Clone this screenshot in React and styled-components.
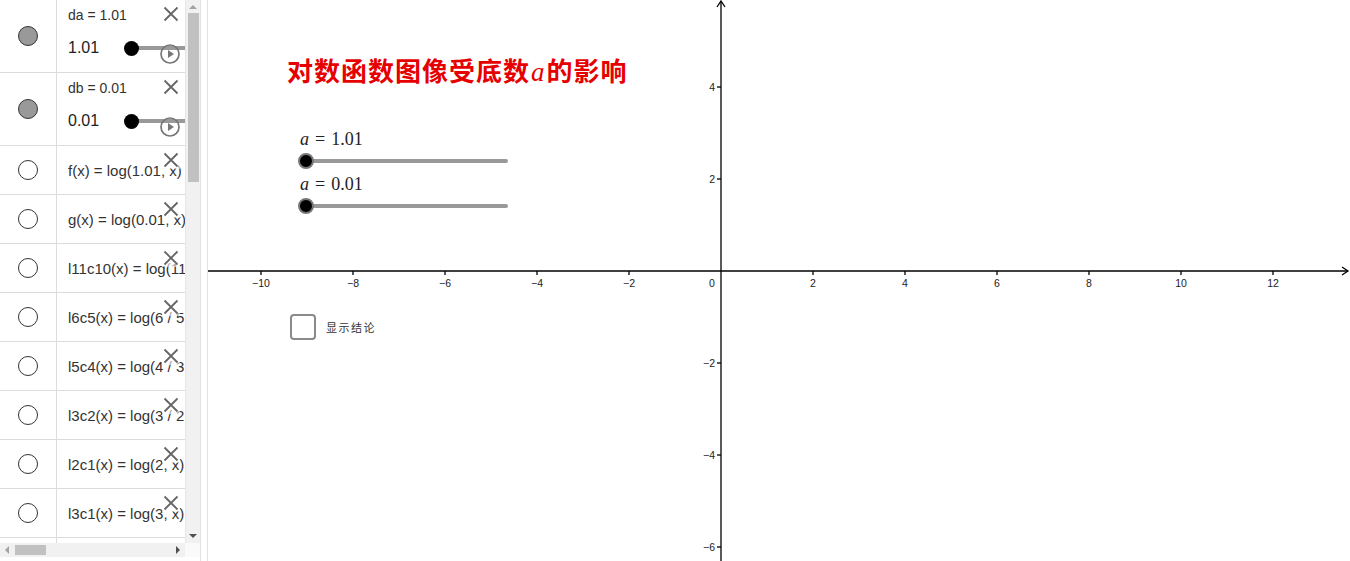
import React from 'react'
import styled, { createGlobalStyle } from 'styled-components'

const GlobalStyle = createGlobalStyle`
  * { box-sizing: border-box; }
  html, body { margin: 0; padding: 0; background: #fff; overflow: hidden; }
  body { font-family: "Liberation Sans", Arial, sans-serif; color: #333; }
`

const UNIT = 46
const OX = 513
const OY = 271

const functions = [
  'f(x) = log(1.01, x)',
  'g(x) = log(0.01, x)',
  'l11c10(x) = log(11 / 10, x)',
  'l6c5(x) = log(6 / 5, x)',
  'l5c4(x) = log(4 / 3, x)',
  'l3c2(x) = log(3 / 2, x)',
  'l2c1(x) = log(2, x)',
  'l3c1(x) = log(3, x)',
  '',
]

const sliders = [
  { name: 'da', value: '1.01', height: 73 },
  { name: 'db', value: '0.01', height: 73 },
]

const CloseIcon = () => (
  <svg width="16" height="16" viewBox="0 0 16 16">
    <path d="M1.5 1.5 L14.5 14.5 M14.5 1.5 L1.5 14.5" stroke="#666" strokeWidth="1.8" fill="none" />
  </svg>
)

const PlayIcon = () => (
  <svg width="20" height="20" viewBox="0 0 20 20">
    <circle cx="10" cy="10" r="9" stroke="#777" strokeWidth="1.7" fill="none" />
    <path d="M8 6 L14 10 L8 14 Z" fill="#777" />
  </svg>
)

const Axes = () => {
  const xs = [-10, -8, -6, -4, -2, 2, 4, 6, 8, 10, 12]
  const ys = [-6, -4, -2, 2, 4]
  const minus = (v) => (v < 0 ? '\u2212' + Math.abs(v) : String(v))
  return (
    <AxesSvg width="1142" height="561">
      <g stroke="#000" strokeWidth="1.3" fill="none">
        <line x1="0" y1={OY} x2="1140" y2={OY} />
        <line x1={OX} y1="1" x2={OX} y2="561" />
        <path d={`M1134 ${OY - 4} L1140 ${OY} L1134 ${OY + 4}`} />
        <path d={`M${OX - 4} 7 L${OX} 1 L${OX + 4} 7`} />
        {xs.map((v) => (
          <line key={'tx' + v} x1={OX + v * UNIT} y1={OY} x2={OX + v * UNIT} y2={OY + 4} />
        ))}
        {ys.map((v) => (
          <line key={'ty' + v} x1={OX - 4} y1={OY - v * UNIT} x2={OX} y2={OY - v * UNIT} />
        ))}
      </g>
      <g fill="#222" fontSize="10.5" fontFamily="Liberation Sans, Arial, sans-serif">
        {xs.map((v) => (
          <text key={'lx' + v} x={OX + v * UNIT} y={OY + 16} textAnchor="middle">{minus(v)}</text>
        ))}
        <text x={OX - 9} y={OY + 16} textAnchor="middle">0</text>
        {ys.map((v) => (
          <text key={'ly' + v} x={OX - 6} y={OY - v * UNIT + 4} textAnchor="end">{minus(v)}</text>
        ))}
      </g>
    </AxesSvg>
  )
}

const App = () => {
  return (
    <>
      <GlobalStyle />
      <Page>
        <Sidebar>
          <ListViewport>
            {sliders.map((s) => (
              <Row key={s.name} $height={s.height}>
                <MarbleCell>
                  <Marble $filled />
                </MarbleCell>
                <Content>
                  <SliderName>{s.name} = {s.value}</SliderName>
                  <ValueLine>
                    <ValueText>{s.value}</ValueText>
                    <Knob />
                    <TrackLine />
                  </ValueLine>
                  <PlayButton><PlayIcon /></PlayButton>
                  <CloseButton><CloseIcon /></CloseButton>
                </Content>
              </Row>
            ))}
            {functions.map((f, i) => (
              <Row key={i} $height={49}>
                <MarbleCell>{f && <Marble />}</MarbleCell>
                <Content $center>
                  <Formula>{f}</Formula>
                  {f && <CloseButton><CloseIcon /></CloseButton>}
                </Content>
              </Row>
            ))}
          </ListViewport>
          <VScroll>
            <ArrowUp />
            <VThumb />
            <ArrowDown />
          </VScroll>
          <HScroll>
            <ArrowLeft />
            <HThumb />
            <ArrowRight />
          </HScroll>
          <Corner />
        </Sidebar>
        <Divider />
        <Graph>
          <Axes />
          <Title>
            对数函数图像受底数<MathA>a</MathA>的影响
          </Title>
          <GraphSlider $top={128}>
            <SliderLabel><i>a</i><Eq>=</Eq>1.01</SliderLabel>
            <GraphTrack>
              <GraphKnob />
            </GraphTrack>
          </GraphSlider>
          <GraphSlider $top={173}>
            <SliderLabel><i>a</i><Eq>=</Eq>0.01</SliderLabel>
            <GraphTrack>
              <GraphKnob />
            </GraphTrack>
          </GraphSlider>
          <CheckRow>
            <CheckBox />
            <CheckLabel>显示结论</CheckLabel>
          </CheckRow>
        </Graph>
      </Page>
    </>
  )
}

export default App

const Page = styled.div`
  display: flex;
  width: 1350px;
  height: 561px;
  background: #fff;
`

const Sidebar = styled.div`
  width: 200px;
  height: 561px;
  display: grid;
  grid-template-columns: 185px 15px;
  grid-template-rows: 543px 14px;
  flex-shrink: 0;
`

const ListViewport = styled.div`
  overflow: hidden;
  background: #fff;
`

const Row = styled.div`
  display: flex;
  height: ${(p) => p.$height}px;
  border-bottom: 1px solid #dcdcdc;
`

const MarbleCell = styled.div`
  width: 57px;
  flex-shrink: 0;
  display: flex;
  align-items: center;
  justify-content: center;
  border-right: 1px solid #dcdcdc;
  padding-right: 1px;
`

const Marble = styled.div`
  width: 20px;
  height: 20px;
  border-radius: 50%;
  border: 1px solid #333;
  background: ${(p) => (p.$filled ? '#999' : '#fff')};
`

const Content = styled.div`
  position: relative;
  flex: 1;
  min-width: 0;
  padding-left: 11px;
  display: flex;
  flex-direction: column;
  justify-content: ${(p) => (p.$center ? 'center' : 'flex-start')};
  overflow: hidden;
`

const SliderName = styled.div`
  margin-top: 6px;
  font-size: 14px;
  line-height: 18px;
  color: #333;
  white-space: nowrap;
`

const ValueLine = styled.div`
  margin-top: 14px;
  height: 20px;
  display: flex;
  align-items: center;
`

const ValueText = styled.div`
  width: 56px;
  flex-shrink: 0;
  font-size: 16px;
  color: #222;
`

const Knob = styled.div`
  width: 15px;
  height: 15px;
  border-radius: 50%;
  background: #000;
  flex-shrink: 0;
  position: relative;
  z-index: 1;
`

const TrackLine = styled.div`
  flex: 1;
  height: 4px;
  margin-left: -2px;
  background: #999;
`

const PlayButton = styled.div`
  position: absolute;
  left: 103px;
  top: 44px;
  width: 20px;
  height: 20px;
  display: flex;
`

const CloseButton = styled.div`
  position: absolute;
  left: 105px;
  top: 5px;
  width: 18px;
  height: 18px;
  padding: 1px;
  display: flex;
  background: rgba(255, 255, 255, 0.55);
`

const Formula = styled.div`
  font-size: 15px;
  color: #333;
  white-space: nowrap;
`

const VScroll = styled.div`
  background: #f1f1f1;
  border-left: 1px solid #e6e6e6;
  display: flex;
  flex-direction: column;
  align-items: center;
`

const VThumb = styled.div`
  width: 11px;
  height: 169px;
  background: #c1c1c1;
`

const ArrowUp = styled.div`
  width: 0;
  height: 0;
  margin: 5px 0 4px;
  border-left: 4px solid transparent;
  border-right: 4px solid transparent;
  border-bottom: 4px solid #a3a3a3;
`

const ArrowDown = styled.div`
  width: 0;
  height: 0;
  margin-top: auto;
  margin-bottom: 5px;
  border-left: 4px solid transparent;
  border-right: 4px solid transparent;
  border-top: 4px solid #505050;
`

const HScroll = styled.div`
  background: #f1f1f1;
  display: flex;
  align-items: center;
  padding: 0 5px;
`

const HThumb = styled.div`
  width: 31px;
  height: 10px;
  margin-left: 6px;
  background: #c1c1c1;
`

const ArrowLeft = styled.div`
  width: 0;
  height: 0;
  border-top: 4px solid transparent;
  border-bottom: 4px solid transparent;
  border-right: 4px solid #a3a3a3;
`

const ArrowRight = styled.div`
  width: 0;
  height: 0;
  margin-left: auto;
  border-top: 4px solid transparent;
  border-bottom: 4px solid transparent;
  border-left: 4px solid #505050;
`

const Corner = styled.div`
  background: #fafafa;
`

const Divider = styled.div`
  width: 8px;
  flex-shrink: 0;
  border-left: 1px solid #e2e2e2;
  border-right: 1px solid #e2e2e2;
  background: #fff;
`

const Graph = styled.div`
  position: relative;
  flex: 1;
  height: 561px;
  overflow: hidden;
`

const AxesSvg = styled.svg`
  display: block;
`

const Title = styled.div`
  position: absolute;
  left: 79px;
  top: 55px;
  font-family: "Noto Sans CJK SC", sans-serif;
  font-weight: 700;
  font-size: 26px;
  line-height: 30px;
  letter-spacing: 1px;
  color: #e60000;
  white-space: nowrap;
`

const MathA = styled.span`
  font-family: "Liberation Serif", serif;
  font-style: italic;
  font-weight: 400;
  font-size: 27px;
  letter-spacing: 0;
  margin: 0 2px 0 1px;
`

const GraphSlider = styled.div`
  position: absolute;
  left: 90px;
  top: ${(p) => p.$top}px;
  display: flex;
  flex-direction: column;
`

const SliderLabel = styled.div`
  font-family: "Liberation Serif", serif;
  font-size: 18px;
  line-height: 22px;
  color: #222;
  padding-left: 2px;
  white-space: nowrap;
  i { font-style: italic; }
`

const Eq = styled.span`
  margin: 0 6px;
`

const GraphTrack = styled.div`
  position: relative;
  width: 202px;
  height: 4px;
  margin-top: 9px;
  margin-left: 8px;
  border-radius: 2px;
  background: #999;
`

const GraphKnob = styled.div`
  position: absolute;
  left: -8px;
  top: -6px;
  width: 16px;
  height: 16px;
  border-radius: 50%;
  background: #000;
  border: 2px solid #777;
`

const CheckRow = styled.div`
  position: absolute;
  left: 82px;
  top: 314px;
  display: flex;
  align-items: center;
  gap: 10px;
`

const CheckBox = styled.div`
  width: 26px;
  height: 26px;
  border: 2px solid #8a8a8a;
  border-radius: 4px;
  background: #fff;
`

const CheckLabel = styled.div`
  font-family: "Noto Sans CJK SC", sans-serif;
  font-size: 11px;
  letter-spacing: 1.5px;
  color: #333;
`
